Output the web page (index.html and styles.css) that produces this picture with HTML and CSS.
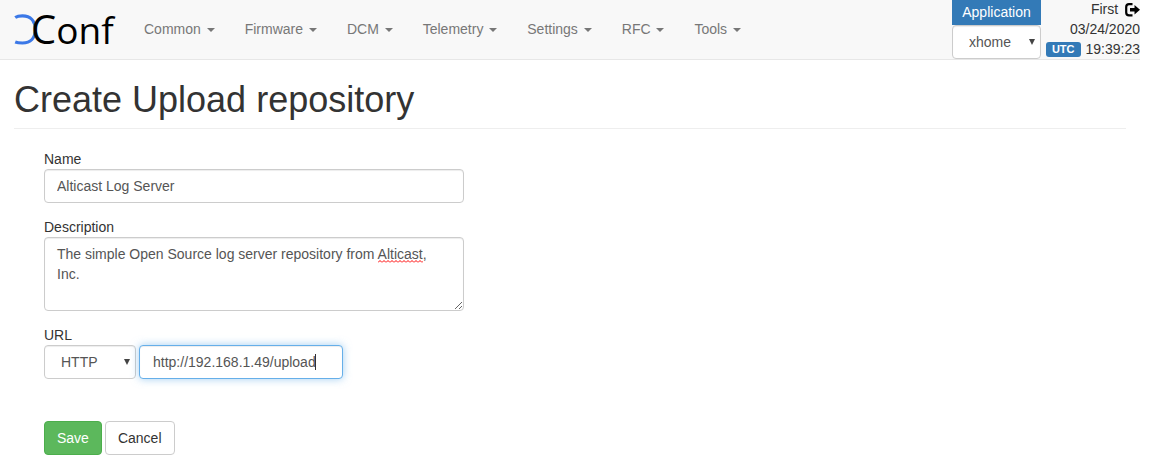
FILE: index.html
```html
<!DOCTYPE html>
<html lang="en">
<head>
<meta charset="utf-8">
<title>XConf</title>
<link rel="stylesheet" href="styles.css">
</head>
<body>
<header class="navbar">
  <a class="brand" href="#" aria-label="XConf">
    <svg class="logo" width="104" height="59" viewBox="0 0 104 59">
      <path d="M1.200 17.500C3 16.300 5.500 15.900 8.500 15.900C16.500 15.900 21.300 21 21.300 29.500C21.300 38 16.500 43 8.500 43C5.500 43 3 42.700 1.200 42" fill="none" stroke="#3b78e7" stroke-width="3.200"/>
      <text class="logo-text" x="17" y="44"><tspan class="logo-initial">C</tspan>onf</text>
    </svg>
  </a>
  <nav class="menu">
    <a class="menu-item" href="#">Common <span class="caret"></span></a>
    <a class="menu-item" href="#">Firmware <span class="caret"></span></a>
    <a class="menu-item" href="#">DCM <span class="caret"></span></a>
    <a class="menu-item" href="#">Telemetry <span class="caret"></span></a>
    <a class="menu-item" href="#">Settings <span class="caret"></span></a>
    <a class="menu-item" href="#">RFC <span class="caret"></span></a>
    <a class="menu-item" href="#">Tools <span class="caret"></span></a>
  </nav>
  <div class="application">
    <label class="application-label" for="application">Application</label>
    <select class="control select" id="application"><option>xhome</option></select>
  </div>
  <div class="session">
    <div class="session-row">First
      <a class="logout" href="#" aria-label="Log out">
        <svg width="15" height="14" viewBox="0 0 15 14"><path d="M7.500 1.200H4Q1.200 1.200 1.200 4V9.500Q1.200 12.300 4 12.300H7.500" fill="none" stroke="#000" stroke-width="2.200"/><path d="M5 5H9.500V2L15 6.800L9.500 11.500V8.500H5Z"/></svg>
      </a>
    </div>
    <div class="session-row">03/24/2020</div>
    <div class="session-row"><span class="badge">UTC</span>19:39:23</div>
  </div>
</header>
<main class="page">
  <h1 class="page-title">Create Upload repository</h1>
  <form class="form">
    <div class="field">
      <label for="name">Name</label>
      <input class="control" id="name" type="text" value="Alticast Log Server">
    </div>
    <div class="field">
      <label for="description">Description</label>
      <div class="overlay-box">
        <textarea class="control area" id="description" rows="3" spellcheck="false">The simple Open Source log server repository from Alticast, Inc.</textarea>
        <svg class="squiggle" width="45" height="3" aria-hidden="true">
          <defs><pattern id="wave" width="4" height="3" patternUnits="userSpaceOnUse"><path d="M0 2.500L2 .5L4 2.500" fill="none" stroke="#f00"/></pattern></defs>
          <rect width="45" height="3" fill="url(#wave)"/>
        </svg>
      </div>
    </div>
    <div class="field">
      <label for="url">URL</label>
      <div class="url-row">
        <select class="control select protocol" id="protocol" aria-label="Protocol"><option>HTTP</option></select>
        <div class="overlay-box">
          <input class="control url focused" id="url" type="text" value="http://192.168.1.49/upload">
          <span class="text-cursor"></span>
        </div>
      </div>
    </div>
    <div class="actions">
      <button class="btn btn-save" type="button">Save</button>
      <button class="btn" type="button">Cancel</button>
    </div>
  </form>
</main>
</body>
</html>
```

FILE: styles.css
```css
* { box-sizing: border-box; }

body {
  margin: 0 12px 0 0;
  background: #fff;
  color: #333;
  font: 14px/20px "Liberation Sans", Arial, sans-serif;
}

.navbar {
  display: flex;
  align-items: flex-start;
  background: #f8f8f8;
  border-bottom: 1px solid #e7e7e7;
}

.brand { padding-left: 14px; }
.logo { display: block; }
.logo-text { font: 500 37px "Open Sans", sans-serif; fill: #000; }
.logo-initial { font-size: 40px; }

.menu { display: flex; flex: 1; padding-left: 11px; }
.menu-item {
  padding: 19px 15px 20px;
  color: #777;
  text-decoration: none;
  white-space: nowrap;
}
.caret {
  display: inline-block;
  margin-left: 2px;
  vertical-align: middle;
  border-top: 4px solid;
  border-right: 4px solid transparent;
  border-left: 4px solid transparent;
}

.application { width: 89px; }
.application-label {
  display: block;
  height: 25px;
  line-height: 25px;
  background: #337ab7;
  color: #fff;
  text-align: center;
}

.session { width: 99px; text-align: right; line-height: 20px; }
.session-row { height: 20px; line-height: 19px; white-space: nowrap; }
.session-row:last-child { height: 19px; }
.logout { display: inline-block; margin-left: 3px; vertical-align: middle; }
.logout svg { display: block; }
.badge {
  display: inline-block;
  margin-right: 5px;
  padding: 2px 6px;
  border-radius: 3px;
  background: #337ab7;
  color: #fff;
  font-size: 11px;
  font-weight: bold;
  line-height: 11px;
  vertical-align: 1px;
}

.page { padding: 0 14px; }
.page-title {
  margin: 0;
  padding: 19px 0 8px;
  border-bottom: 1px solid #eee;
  font-size: 36px;
  font-weight: normal;
  line-height: 41px;
}
.form { padding: 20px 30px; }
.field { margin-bottom: 14px; max-width: 420px; }
.field label { display: block; }

.control {
  display: block;
  width: 100%;
  height: 34px;
  margin: 0;
  padding: 6px 12px;
  border: 1px solid #ccc;
  border-radius: 4px;
  background-color: #fff;
  box-shadow: inset 0 1px 1px rgba(0, 0, 0, .075);
  color: #555;
  font: inherit;
}
.area { height: auto; resize: both; }
.select {
  appearance: none;
  padding: 6px 16px;
  background-image: url("data:image/svg+xml,%3Csvg xmlns='http://www.w3.org/2000/svg' width='6' height='6'%3E%3Cpath d='M0 0H6L3 6Z' fill='%23444'/%3E%3C/svg%3E");
  background-repeat: no-repeat;
  background-position: right 5px center;
}
.url-row { display: flex; gap: 3px; }
.protocol { width: 92px; }
.url { width: 204px; padding: 6px 13px; }
.focused {
  outline: 0;
  border-color: #66afe9;
  box-shadow: inset 0 1px 1px rgba(0, 0, 0, .075), 0 0 8px rgba(102, 175, 233, .6);
}

.overlay-box { position: relative; }
.squiggle { position: absolute; left: 334px; top: 23px; }
.text-cursor {
  position: absolute;
  left: 176px;
  top: 9px;
  width: 1px;
  height: 16px;
  background: #333;
}

.actions { display: flex; gap: 3px; padding-top: 28px; }
.btn {
  height: 34px;
  padding: 6px 12px;
  border: 1px solid #ccc;
  border-radius: 4px;
  background: #fff;
  color: #333;
  font: inherit;
}
.btn-save { border-color: #4cae4c; background: #5cb85c; color: #fff; }
```
